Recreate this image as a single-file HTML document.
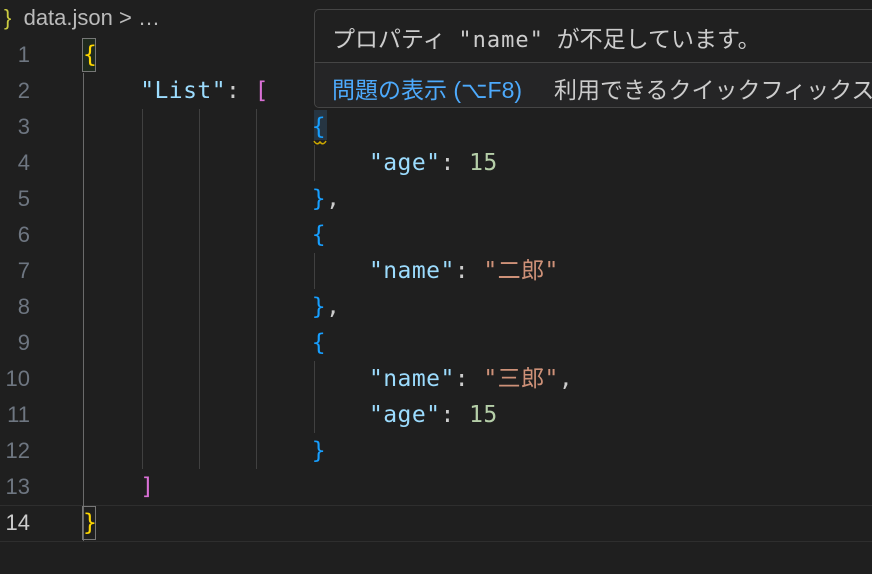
<!DOCTYPE html>
<html><head><meta charset="utf-8"><style>
body{margin:0;width:872px;height:574px;background:#1f1f1f;overflow:hidden;position:relative;font-family:"DejaVu Sans Mono","Liberation Mono","Noto Sans CJK JP",monospace;}
.ln{position:absolute;left:0;width:30px;text-align:right;color:#6e7681;font-size:22px;font-family:"Liberation Sans",sans-serif;line-height:36px;}
.code{position:absolute;left:83px;font-size:23px;letter-spacing:0.45px;line-height:36px;white-space:pre;color:#ccc;}
.k{color:#9cdcfe}.s{color:#ce9178}.n{color:#b5cea8}.y{color:#ffd700}.p{color:#da70d6}.b{color:#179fff}
.g{position:absolute;width:1px;background:#404040;}
</style></head><body>
<div style="position:absolute;left:4px;top:1px;font-family:'Liberation Sans','Noto Sans CJK JP',sans-serif;font-size:22px;color:#bbb;line-height:34px"><span style="color:#cbcb41">}</span>&nbsp; data.json &gt; …</div>
<div style="position:absolute;left:0;right:0;top:505px;height:35px;border-top:1px solid #2e2e2e;border-bottom:1px solid #2e2e2e"></div>
<div class="ln" style="top:37px">1</div><div class="ln" style="top:73px">2</div><div class="ln" style="top:109px">3</div><div class="ln" style="top:145px">4</div><div class="ln" style="top:181px">5</div><div class="ln" style="top:217px">6</div><div class="ln" style="top:253px">7</div><div class="ln" style="top:289px">8</div><div class="ln" style="top:325px">9</div><div class="ln" style="top:361px">10</div><div class="ln" style="top:397px">11</div><div class="ln" style="top:433px">12</div><div class="ln" style="top:469px">13</div><div class="ln" style="top:505px;color:#ccc">14</div>
<div class="g" style="left:83px;top:73px;height:468px;background:#6a6a6a"></div>
<div class="g" style="left:142px;top:109px;height:360px"></div>
<div class="g" style="left:199px;top:109px;height:360px"></div>
<div class="g" style="left:256px;top:109px;height:360px"></div>
<div class="g" style="left:314px;top:145px;height:36px"></div>
<div class="g" style="left:314px;top:253px;height:36px"></div>
<div class="g" style="left:314px;top:361px;height:72px"></div>
<div style="position:absolute;left:82px;top:38px;width:14px;height:34px;border:1px solid #777;background:#1e2a1e;box-sizing:border-box"></div>
<div style="position:absolute;left:82px;top:506px;width:14px;height:34px;border:1px solid #777;box-sizing:border-box"></div>
<div style="position:absolute;left:314px;top:110px;width:13px;height:30px;background:#263542"></div>
<div class="code" style="top:37px"><span class="y">{</span>
    <span class="k">"List"</span>: <span class="p">[</span>
                <span class="b">{</span>
                    <span class="k">"age"</span>: <span class="n">15</span>
                <span class="b">}</span>,
                <span class="b">{</span>
                    <span class="k">"name"</span>: <span class="s">"二郎"</span>
                <span class="b">}</span>,
                <span class="b">{</span>
                    <span class="k">"name"</span>: <span class="s">"三郎"</span>,
                    <span class="k">"age"</span>: <span class="n">15</span>
                <span class="b">}</span>
    <span class="p">]</span>
<span class="y">}</span></div>
<svg style="position:absolute;left:313px;top:139px" width="14" height="8"><path d="M1 2 Q4 7 7 3 Q10 7 13 2" stroke="#cca700" stroke-width="1.5" fill="none"/></svg>
<div style="position:absolute;left:314px;top:9px;width:570px;height:99px;background:#202020;border:1px solid #454545;border-radius:5px;box-sizing:border-box;font-family:'Liberation Sans','Noto Sans CJK JP',sans-serif;font-size:23px;">
<div style="position:absolute;left:17px;top:10px;color:#ccc;white-space:pre">プロパティ  <span style="font-family:'DejaVu Sans Mono',monospace;font-size:22px;letter-spacing:1px">"name"</span>  が不足しています。</div>
<div style="position:absolute;left:0;right:0;top:52px;height:1px;background:#454545"></div>
<div style="position:absolute;left:0;right:0;top:53px;bottom:0;background:#252526;border-radius:0 0 5px 5px"></div>
<div style="position:absolute;left:17px;top:61px;white-space:pre;color:#ccc"><span style="color:#4daafc">問題の表示 (⌥F8)</span>     利用できるクイックフィックス</div>
</div>
</body></html>
